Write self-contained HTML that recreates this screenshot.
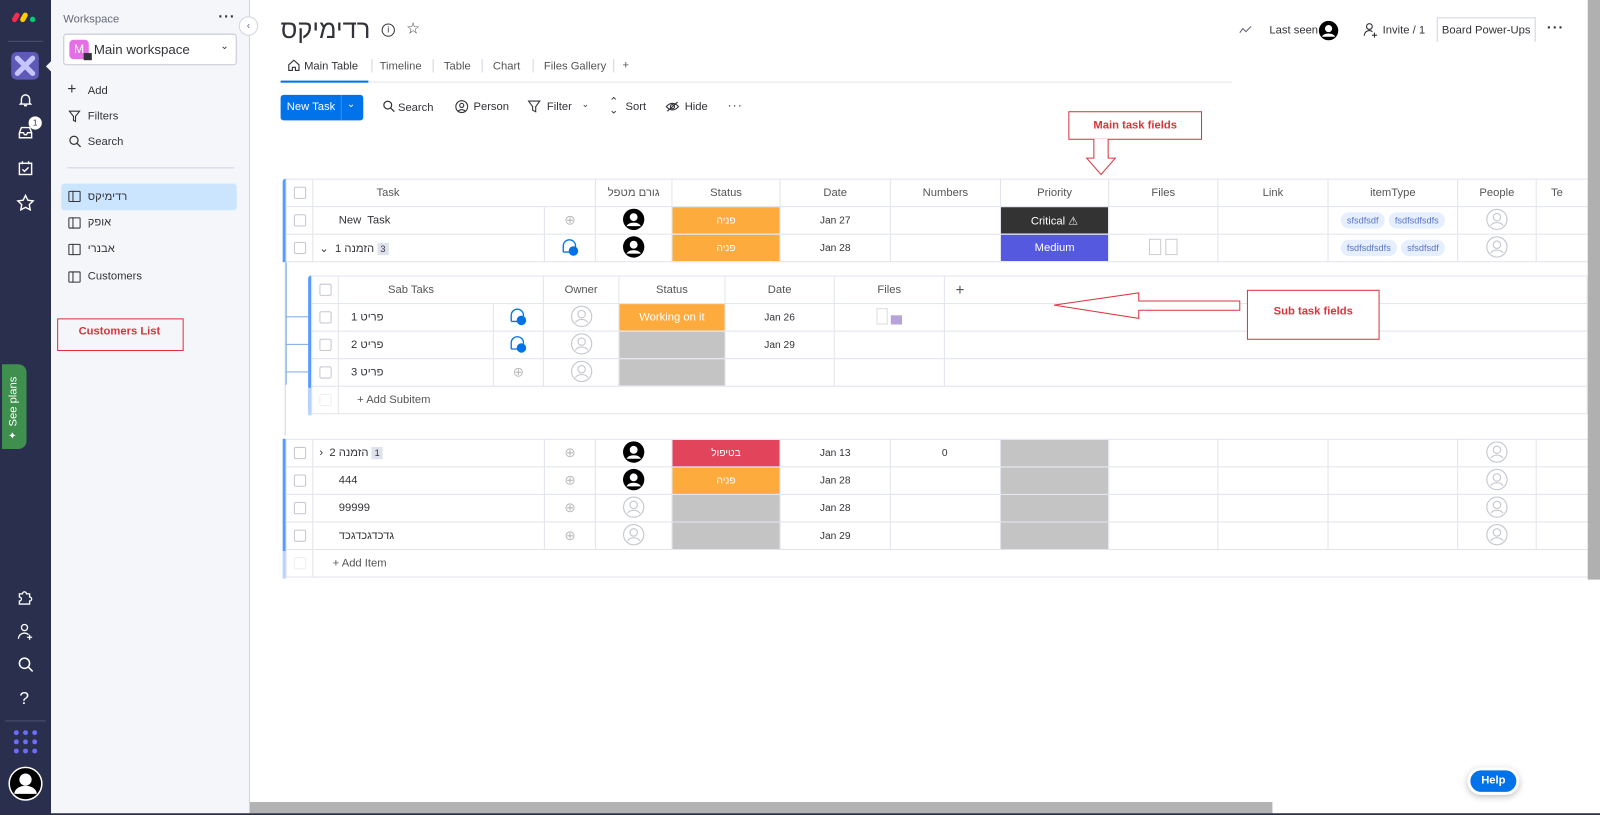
<!DOCTYPE html>
<html><head><meta charset="utf-8">
<style>
*{box-sizing:border-box;margin:0;padding:0}
html,body{width:1600px;height:815px;overflow:hidden;background:#fff;font-family:"Liberation Sans",sans-serif;color:#323338}
#w{position:absolute;left:0;top:0;width:1568px;height:799px;transform:scale(1.0204);transform-origin:0 0}
.a{position:absolute}
.nav{left:0;top:0;width:50px;height:799px;background:#292f4c}
.ws{left:50px;top:0;width:195px;height:799px;background:#f5f6fa;border-right:1px solid #d0d4e4}
.t11{font-size:11px}
table{border-collapse:collapse;table-layout:fixed;position:absolute;font-size:11px}
td{border:1px solid #e1e4ec;height:27px;text-align:center;vertical-align:middle;overflow:hidden;white-space:nowrap;color:#323338}
.hd td{color:#555;font-size:11px}
.cb{display:inline-block;width:12px;height:12px;border:1px solid #c5c7d0;border-radius:2px;vertical-align:middle}
.or{background:#fdab3d;color:#fff;font-size:10px}
.gr{background:#c4c4c4}
.rd{background:#e2445c;color:#fff;font-size:10px}
.tag{display:inline-block;background:#e6efff;color:#5a73c8;border-radius:9px;padding:3px 6px;font-size:9px;margin:0 2px}
.lt{text-align:left;padding-left:20px}
.redbox{border:1px solid #d9343c;color:#d9343c;font-weight:bold;font-size:11px;text-align:center}
.bd{background:#dfe2ec;font-size:9px;padding:1px 3px}
</style></head><body><div id="w">

<div class="a nav"></div>
<svg class="a" style="left:11px;top:9px" width="28" height="14" viewBox="0 0 28 14"><rect x="2" y="3" width="5" height="10" rx="2.5" transform="rotate(30 4.5 8)" fill="#f62b54"/><rect x="10" y="3" width="5" height="10" rx="2.5" transform="rotate(30 12.5 8)" fill="#ffcc00"/><circle cx="21" cy="10" r="2.7" fill="#00ca72"/></svg>
<div class="a" style="left:8px;top:40px;width:34px;height:1px;background:#4b5173"></div>
<div class="a" style="left:11px;top:51px;width:27px;height:27px;background:#5e5ab8;border-radius:5px"></div>
<svg class="a" style="left:14px;top:54px" width="21" height="21" viewBox="0 0 21 21"><path d="M3 3L18 18M18 3L3 18" stroke="#c7c5ff" stroke-width="5" stroke-linecap="round"/></svg>
<div class="a" style="left:45px;top:59px;width:0;height:0;border-top:6px solid transparent;border-bottom:6px solid transparent;border-right:6px solid #f5f6fa"></div>
<svg class="a" style="left:17px;top:90px" width="16" height="16" viewBox="0 0 16 16" fill="none" stroke="#fff" stroke-width="1.4"><path d="M4 11V7a4 4 0 018 0v4l1 1H3z M6.5 13.5h3"/></svg>
<svg class="a" style="left:17px;top:123px" width="16" height="14" viewBox="0 0 16 14" fill="none" stroke="#fff" stroke-width="1.4"><path d="M2 7l2-5h8l2 5v5H2z M2 7h4l1 2h2l1-2h4"/></svg>
<div class="a" style="left:28px;top:114px;width:13px;height:13px;border-radius:50%;background:#fff;color:#292f4c;font-size:8px;text-align:center;line-height:13px">1</div>
<svg class="a" style="left:17px;top:157px" width="16" height="16" viewBox="0 0 16 16" fill="none" stroke="#fff" stroke-width="1.4"><rect x="2" y="3" width="12" height="11"/><path d="M5 1v3M11 1v3M5 9l2 2 4-4"/></svg>
<svg class="a" style="left:16px;top:190px" width="18" height="17" viewBox="0 0 18 17" fill="none" stroke="#fff" stroke-width="1.4"><path d="M9 1.5l2.3 4.7 5.2.7-3.8 3.6.9 5.1L9 13.2 4.4 15.6l.9-5.1L1.5 6.9l5.2-.7z"/></svg>
<div class="a" style="left:2px;top:357px;width:24px;height:83px;background:#3f8f4e;border-radius:0 8px 8px 0"></div>
<div class="a" style="color:#fff;font-size:11px;transform:rotate(-90deg);transform-origin:left top;top:418px;left:7px;white-space:nowrap">See plans</div>
<div class="a" style="left:8px;top:422px;color:#fff;font-size:10px">✦</div>
<svg class="a" style="left:16px;top:576px" width="18" height="18" viewBox="0 0 18 18" fill="none" stroke="#fff" stroke-width="1.3"><path d="M3 6h3a2 2 0 114 0h3v3a2 2 0 110 4v3H3v-3a2 2 0 100-4z"/></svg>
<svg class="a" style="left:16px;top:610px" width="18" height="18" viewBox="0 0 18 18" fill="none" stroke="#fff" stroke-width="1.3"><circle cx="8" cy="5" r="3"/><path d="M2 16a6 6 0 0110-4M13 12v5M10.5 14.5h5"/></svg>
<svg class="a" style="left:17px;top:643px" width="17" height="17" viewBox="0 0 17 17" fill="none" stroke="#fff" stroke-width="1.5"><circle cx="7" cy="7" r="5"/><path d="M11 11l4 4"/></svg>
<div class="a" style="left:19px;top:675px;color:#fff;font-size:17px">?</div>
<div class="a" style="left:5px;top:706px;width:40px;height:1px;background:#4b5173"></div>
<svg class="a" style="left:13px;top:715px" width="24" height="24" viewBox="0 0 24 24" fill="#6c6cff"><circle cx="3" cy="3" r="2.4"/><circle cx="12" cy="3" r="2.4"/><circle cx="21" cy="3" r="2.4"/><circle cx="3" cy="12" r="2.4"/><circle cx="12" cy="12" r="2.4"/><circle cx="21" cy="12" r="2.4"/><circle cx="3" cy="21" r="2.4"/><circle cx="12" cy="21" r="2.4"/><circle cx="21" cy="21" r="2.4"/></svg>
<svg class="a" style="left:8px;top:751px" width="34" height="34" viewBox="0 0 34 34"><circle cx="17" cy="17" r="16" fill="#000" stroke="#fff" stroke-width="1.5"/><circle cx="17" cy="13" r="6" fill="#fff"/><path d="M6 27a11 8 0 0122 0z" fill="#fff"/></svg>

<div class="a ws"></div>
<div class="a t11" style="left:62px;top:13px;color:#676879">Workspace</div>
<div class="a" style="left:214px;top:8px;font-size:14px;letter-spacing:1px;color:#323338;font-weight:bold">···</div>
<div class="a" style="left:234px;top:16px;width:19px;height:19px;border-radius:50%;background:#fff;border:1px solid #d0d4e4;font-size:10px;text-align:center;line-height:17px;color:#676879">‹</div>
<div class="a" style="left:62px;top:33px;width:170px;height:31px;background:#fff;border:1px solid #c3c6d4;border-radius:3px"></div>
<div class="a" style="left:68px;top:39px;width:19px;height:19px;border-radius:4px;background:#e570e5;color:#fff;font-size:12px;text-align:center;line-height:19px">M</div>
<div class="a" style="left:82px;top:52px;width:8px;height:7px;background:#323338"></div>
<div class="a" style="left:92px;top:41px;font-size:13px;color:#323338">Main workspace</div>
<div class="a" style="left:216px;top:40px;font-size:10px;color:#323338">⌄</div>
<div class="a" style="left:66px;top:81px;font-size:15px;line-height:14px">+</div>
<div class="a t11" style="left:86px;top:83px">Add</div>
<svg class="a" style="left:67px;top:108px" width="12" height="12" viewBox="0 0 12 12" fill="none" stroke="#323338" stroke-width="1.1"><path d="M1 1h10L7 6v5L5 10V6z"/></svg>
<div class="a t11" style="left:86px;top:108px">Filters</div>
<svg class="a" style="left:67px;top:132px" width="13" height="13" viewBox="0 0 13 13" fill="none" stroke="#323338" stroke-width="1.2"><circle cx="5.5" cy="5.5" r="4"/><path d="M8.5 8.5l3.5 3.5"/></svg>
<div class="a t11" style="left:86px;top:133px">Search</div>
<div class="a" style="left:66px;top:164px;width:164px;height:1px;background:#d0d4e4"></div>
<div class="a" style="left:60px;top:180px;width:172px;height:26px;background:#cce5ff;border-radius:3px"></div>
<div class="a" style="left:67px;top:187px;width:12px;height:11px;border:1px solid #323338;border-radius:1px"></div><div class="a" style="left:71px;top:187px;width:1px;height:11px;background:#323338"></div>
<div class="a t11" style="left:86px;top:187px">רדימיקס</div>
<div class="a" style="left:67px;top:213px;width:12px;height:11px;border:1px solid #323338;border-radius:1px"></div><div class="a" style="left:71px;top:213px;width:1px;height:11px;background:#323338"></div>
<div class="a t11" style="left:86px;top:212px">אופק</div>
<div class="a" style="left:67px;top:239px;width:12px;height:11px;border:1px solid #323338;border-radius:1px"></div><div class="a" style="left:71px;top:239px;width:1px;height:11px;background:#323338"></div>
<div class="a t11" style="left:86px;top:238px">אבנרי</div>
<div class="a" style="left:67px;top:266px;width:12px;height:11px;border:1px solid #323338;border-radius:1px"></div><div class="a" style="left:71px;top:266px;width:1px;height:11px;background:#323338"></div>
<div class="a t11" style="left:86px;top:265px">Customers</div>
<div class="a redbox" style="left:56px;top:312px;width:124px;height:32px;padding-top:6px;text-align:left;padding-left:20px">Customers List</div>

<div class="a" style="left:275px;top:15px;font-size:25px;color:#323338">רדימיקס</div>
<div class="a" style="left:374px;top:23px;width:13px;height:13px;border:1.3px solid #323338;border-radius:50%;font-size:9px;text-align:center;line-height:11px">i</div>
<div class="a" style="left:398px;top:19px;font-size:15px;color:#323338">☆</div>
<svg class="a" style="left:1214px;top:25px" width="13" height="8" viewBox="0 0 13 8" fill="none" stroke="#676879" stroke-width="1.1"><path d="M1 7l3-4 3 3 5-5"/></svg>
<div class="a t11" style="left:1244px;top:24px">Last seen</div>
<svg class="a" style="left:1292px;top:20px" width="20" height="20" viewBox="0 0 20 20"><circle cx="10" cy="10" r="9.5" fill="#000"/><circle cx="10" cy="8" r="3.5" fill="#fff"/><path d="M3.5 16a7 5 0 0113 0z" fill="#fff"/></svg>
<svg class="a" style="left:1336px;top:22px" width="15" height="15" viewBox="0 0 15 15" fill="none" stroke="#323338" stroke-width="1.1"><circle cx="6" cy="4" r="2.8"/><path d="M1 13a5 5 0 018-4M11 10v5M8.5 12.5h5"/></svg>
<div class="a t11" style="left:1355px;top:24px">Invite / 1</div>
<div class="a t11" style="left:1408px;top:17px;width:97px;height:24px;border:1px solid #d0d4e4;border-bottom:none;text-align:center;line-height:24px">Board Power-Ups</div>
<div class="a" style="left:1516px;top:19px;font-size:14px;font-weight:bold;letter-spacing:1px">···</div>

<div class="a" style="left:275px;top:80px;width:932px;height:1px;background:#e1e4ec"></div>
<div class="a" style="left:275px;top:79px;width:86px;height:2px;background:#0073ea"></div>
<svg class="a" style="left:282px;top:58px" width="12" height="12" viewBox="0 0 12 12" fill="none" stroke="#323338" stroke-width="1.1"><path d="M1 5.5L6 1l5 4.5V11H7.5V8h-3v3H1z"/></svg>
<div class="a t11" style="left:298px;top:59px">Main Table</div>
<div class="a" style="left:364px;top:58px;width:1px;height:13px;background:#d0d4e4"></div>
<div class="a t11" style="left:372px;top:59px;color:#555">Timeline</div>
<div class="a" style="left:424px;top:58px;width:1px;height:13px;background:#d0d4e4"></div>
<div class="a t11" style="left:435px;top:59px;color:#555">Table</div>
<div class="a" style="left:472px;top:58px;width:1px;height:13px;background:#d0d4e4"></div>
<div class="a t11" style="left:483px;top:59px;color:#555">Chart</div>
<div class="a" style="left:522px;top:58px;width:1px;height:13px;background:#d0d4e4"></div>
<div class="a t11" style="left:533px;top:59px;color:#555">Files Gallery</div>
<div class="a" style="left:601px;top:58px;width:1px;height:13px;background:#d0d4e4"></div>
<div class="a t11" style="left:610px;top:58px;color:#555">+</div>

<div class="a" style="left:275px;top:93px;width:81px;height:25px;background:#0073ea;border-radius:3px"></div>
<div class="a" style="left:334px;top:93px;width:1px;height:25px;background:#3a8ff0"></div>
<div class="a" style="left:281px;top:99px;color:#fff;font-size:11px">New Task</div>
<div class="a" style="left:340px;top:97px;color:#fff;font-size:10px">⌄</div>
<svg class="a" style="left:375px;top:98px" width="12" height="12" viewBox="0 0 12 12" fill="none" stroke="#323338" stroke-width="1.2"><circle cx="5" cy="5" r="3.8"/><path d="M8 8l3.5 3.5"/></svg>
<div class="a t11" style="left:390px;top:100px">Search</div>
<svg class="a" style="left:446px;top:98px" width="13" height="13" viewBox="0 0 13 13" fill="none" stroke="#323338" stroke-width="1.1"><circle cx="6.5" cy="6.5" r="5.8"/><circle cx="6.5" cy="5.3" r="2"/><path d="M3 11a4 3 0 017 0"/></svg>
<div class="a t11" style="left:464px;top:99px">Person</div>
<svg class="a" style="left:517px;top:98px" width="13" height="13" viewBox="0 0 13 13" fill="none" stroke="#323338" stroke-width="1.1"><path d="M1 1h11L8 6.5v5L5 10V6.5z"/></svg>
<div class="a t11" style="left:536px;top:99px">Filter</div>
<div class="a" style="left:570px;top:97px;font-size:9px">⌄</div>
<div class="a" style="left:597px;top:96px;font-size:11px;line-height:8px">⌃<br>⌄</div>
<div class="a t11" style="left:613px;top:99px">Sort</div>
<svg class="a" style="left:652px;top:99px" width="14" height="11" viewBox="0 0 14 11" fill="none" stroke="#323338" stroke-width="1.1"><path d="M1 5.5Q7 -1 13 5.5Q7 12 1 5.5z"/><circle cx="7" cy="5.5" r="2"/><path d="M2 10L12 1"/></svg>
<div class="a t11" style="left:671px;top:99px">Hide</div>
<div class="a" style="left:713px;top:96px;font-size:12px;letter-spacing:1px">···</div>

<div class="a redbox" style="left:1047px;top:109px;width:131px;height:28px;line-height:26px;background:#fff">Main task fields</div>
<svg class="a" style="left:1063px;top:136px" width="32" height="36" viewBox="0 0 32 36" fill="#fff" stroke="#d9343c" stroke-width="1"><path d="M9 0v19H2l14 16 14-16h-7V0"/></svg>

<div class="a" style="left:277px;top:175px;width:3px;height:82px;background:#579bfc;border-radius:3px 0 0 0"></div>
<table style="left:280px;top:175px;width:1276px">
<colgroup><col style="width:26px"><col style="width:227px"><col style="width:50px"><col style="width:75px"><col style="width:106px"><col style="width:108px"><col style="width:108px"><col style="width:106px"><col style="width:107px"><col style="width:108px"><col style="width:127px"><col style="width:77px"><col style="width:51px"></colgroup>
<tr class="hd"><td><span class="cb"></span></td><td style="border-right:none;padding-right:80px">Task</td><td style="border-left:none"></td><td>גורם מטפל</td><td>Status</td><td>Date</td><td>Numbers</td><td>Priority</td><td>Files</td><td>Link</td><td>itemType</td><td>People</td><td style="text-align:left;padding-left:14px">Te</td></tr>
<tr><td><span class="cb"></span></td><td class="lt" style="padding-left:25px">New&nbsp; Task</td><td><span style="color:#bbb;font-size:13px">⊕</span></td><td><svg width="22" height="22" viewBox="0 0 20 20"><circle cx="10" cy="10" r="9.5" fill="#000"/><circle cx="10" cy="8" r="3.5" fill="#fff"/><path d="M3.5 16a7 5 0 0113 0z" fill="#fff"/></svg></td><td class="or">פניה</td><td style="font-size:10px">Jan 27</td><td></td><td style="background:#333;color:#fff">Critical ⚠</td><td></td><td></td><td><span class="tag">sfsdfsdf</span><span class="tag">fsdfsdfsdfs</span></td><td><svg width="22" height="22" viewBox="0 0 20 20" fill="none" stroke="#c5c7d0"><circle cx="10" cy="10" r="9"/><circle cx="10" cy="8" r="3.3"/><path d="M4.5 15.5a6 4.5 0 0111 0"/></svg></td><td></td></tr>
<tr><td><span class="cb"></span></td><td class="lt" style="padding-left:6px">⌄ &nbsp;<bdi dir="rtl">הזמנה 1</bdi> <span class="bd">3</span></td><td><svg width="18" height="18" viewBox="0 0 18 18" fill="none" stroke="#0073ea" stroke-width="1.3"><path d="M2 14V8a6 6 0 0112 0v1"/><path d="M2 14h6"/><circle cx="12" cy="13" r="4" fill="#0073ea"/></svg></td><td><svg width="22" height="22" viewBox="0 0 20 20"><circle cx="10" cy="10" r="9.5" fill="#000"/><circle cx="10" cy="8" r="3.5" fill="#fff"/><path d="M3.5 16a7 5 0 0113 0z" fill="#fff"/></svg></td><td class="or">פניה</td><td style="font-size:10px">Jan 28</td><td></td><td style="background:#5559df;color:#fff">Medium</td><td><span style="display:inline-block;width:12px;height:16px;border:1px solid #ccc"></span> <span style="display:inline-block;width:12px;height:16px;border:1px solid #ccc"></span></td><td></td><td><span class="tag">fsdfsdfsdfs</span><span class="tag">sfsdfsdf</span></td><td><svg width="22" height="22" viewBox="0 0 20 20" fill="none" stroke="#c5c7d0"><circle cx="10" cy="10" r="9"/><circle cx="10" cy="8" r="3.3"/><path d="M4.5 15.5a6 4.5 0 0111 0"/></svg></td><td></td></tr>
</table>

<div class="a" style="left:279px;top:257px;width:1px;height:170px;background:#d0d4e4"></div>
<div class="a" style="left:280px;top:257px;width:1px;height:120px;background:#7fa9e8"></div>
<div class="a" style="left:280px;top:310px;width:22px;height:1px;background:#7fa9e8"></div>
<div class="a" style="left:280px;top:337px;width:22px;height:1px;background:#7fa9e8"></div>
<div class="a" style="left:280px;top:364px;width:22px;height:1px;background:#7fa9e8"></div>
<div class="a" style="left:302px;top:270px;width:3px;height:137px;background:#579bfc;border-radius:3px 0 0 3px"></div>
<div class="a" style="left:302px;top:380px;width:3px;height:27px;background:#b9d3fb"></div>
<table style="left:305px;top:270px;width:1250px">
<colgroup><col style="width:26px"><col style="width:152px"><col style="width:49px"><col style="width:74px"><col style="width:104px"><col style="width:107px"><col style="width:108px"><col style="width:30px"><col style="width:600px"></colgroup>
<tr class="hd"><td><span class="cb"></span></td><td style="border-right:none;padding-right:10px">Sab Taks</td><td style="border-left:none"></td><td>Owner</td><td>Status</td><td>Date</td><td>Files</td><td style="font-size:15px;border-right:none">+</td><td style="border-left:none"></td></tr>
<tr><td><span class="cb"></span></td><td class="lt" style="padding-left:12px"><bdi dir="rtl">פריט 1</bdi></td><td><svg width="18" height="18" viewBox="0 0 18 18" fill="none" stroke="#0073ea" stroke-width="1.3"><path d="M2 14V8a6 6 0 0112 0v1"/><path d="M2 14h6"/><circle cx="12" cy="13" r="4" fill="#0073ea"/></svg></td><td><svg width="22" height="22" viewBox="0 0 20 20" fill="none" stroke="#c5c7d0"><circle cx="10" cy="10" r="9"/><circle cx="10" cy="8" r="3.3"/><path d="M4.5 15.5a6 4.5 0 0111 0"/></svg></td><td class="or" style="font-size:11px">Working on it</td><td style="font-size:10px">Jan 26</td><td><span style="display:inline-block;width:11px;height:16px;border:1px solid #ddd"></span> <span style="display:inline-block;width:11px;height:9px;background:#b7a3d9"></span></td><td style="border-right:none"></td><td style="border-left:none"></td></tr>
<tr><td><span class="cb"></span></td><td class="lt" style="padding-left:12px"><bdi dir="rtl">פריט 2</bdi></td><td><svg width="18" height="18" viewBox="0 0 18 18" fill="none" stroke="#0073ea" stroke-width="1.3"><path d="M2 14V8a6 6 0 0112 0v1"/><path d="M2 14h6"/><circle cx="12" cy="13" r="4" fill="#0073ea"/></svg></td><td><svg width="22" height="22" viewBox="0 0 20 20" fill="none" stroke="#c5c7d0"><circle cx="10" cy="10" r="9"/><circle cx="10" cy="8" r="3.3"/><path d="M4.5 15.5a6 4.5 0 0111 0"/></svg></td><td class="gr"></td><td style="font-size:10px">Jan 29</td><td></td><td style="border-right:none"></td><td style="border-left:none"></td></tr>
<tr><td><span class="cb"></span></td><td class="lt" style="padding-left:12px"><bdi dir="rtl">פריט 3</bdi></td><td><span style="color:#bbb;font-size:13px">⊕</span></td><td><svg width="22" height="22" viewBox="0 0 20 20" fill="none" stroke="#c5c7d0"><circle cx="10" cy="10" r="9"/><circle cx="10" cy="8" r="3.3"/><path d="M4.5 15.5a6 4.5 0 0111 0"/></svg></td><td class="gr"></td><td></td><td></td><td style="border-right:none"></td><td style="border-left:none"></td></tr>
<tr><td><span class="cb" style="border-color:#eee"></span></td><td colspan="8" style="text-align:left;padding-left:18px;color:#555">+ Add Subitem</td></tr>
</table>
<svg class="a" style="left:1030px;top:286px" width="190" height="28" viewBox="0 0 190 28" fill="#fff" stroke="#d9343c" stroke-width="1"><path d="M3 13L86 1v8h99v9H86v8z"/></svg>
<div class="a redbox" style="left:1222px;top:284px;width:130px;height:49px;padding-top:14px;background:#fff">Sub task fields</div>

<div class="a" style="left:277px;top:430px;width:3px;height:110px;background:#579bfc"></div>
<div class="a" style="left:277px;top:540px;width:3px;height:27px;background:#b9d3fb"></div>
<table style="left:280px;top:430px;width:1276px">
<colgroup><col style="width:26px"><col style="width:227px"><col style="width:50px"><col style="width:75px"><col style="width:106px"><col style="width:108px"><col style="width:108px"><col style="width:106px"><col style="width:107px"><col style="width:108px"><col style="width:127px"><col style="width:77px"><col style="width:51px"></colgroup>
<tr><td><span class="cb"></span></td><td class="lt" style="padding-left:6px">› &nbsp;<bdi dir="rtl">הזמנה 2</bdi> <span class="bd">1</span></td><td><span style="color:#bbb;font-size:13px">⊕</span></td><td><svg width="22" height="22" viewBox="0 0 20 20"><circle cx="10" cy="10" r="9.5" fill="#000"/><circle cx="10" cy="8" r="3.5" fill="#fff"/><path d="M3.5 16a7 5 0 0113 0z" fill="#fff"/></svg></td><td class="rd">בטיפול</td><td style="font-size:10px">Jan 13</td><td style="text-align:left;padding-left:50px;font-size:10px">0</td><td class="gr"></td><td></td><td></td><td></td><td><svg width="22" height="22" viewBox="0 0 20 20" fill="none" stroke="#c5c7d0"><circle cx="10" cy="10" r="9"/><circle cx="10" cy="8" r="3.3"/><path d="M4.5 15.5a6 4.5 0 0111 0"/></svg></td><td></td></tr>
<tr><td><span class="cb"></span></td><td class="lt" style="padding-left:25px">444</td><td><span style="color:#bbb;font-size:13px">⊕</span></td><td><svg width="22" height="22" viewBox="0 0 20 20"><circle cx="10" cy="10" r="9.5" fill="#000"/><circle cx="10" cy="8" r="3.5" fill="#fff"/><path d="M3.5 16a7 5 0 0113 0z" fill="#fff"/></svg></td><td class="or">פניה</td><td style="font-size:10px">Jan 28</td><td></td><td class="gr"></td><td></td><td></td><td></td><td><svg width="22" height="22" viewBox="0 0 20 20" fill="none" stroke="#c5c7d0"><circle cx="10" cy="10" r="9"/><circle cx="10" cy="8" r="3.3"/><path d="M4.5 15.5a6 4.5 0 0111 0"/></svg></td><td></td></tr>
<tr><td><span class="cb"></span></td><td class="lt" style="padding-left:25px">99999</td><td><span style="color:#bbb;font-size:13px">⊕</span></td><td><svg width="22" height="22" viewBox="0 0 20 20" fill="none" stroke="#c5c7d0"><circle cx="10" cy="10" r="9"/><circle cx="10" cy="8" r="3.3"/><path d="M4.5 15.5a6 4.5 0 0111 0"/></svg></td><td class="gr"></td><td style="font-size:10px">Jan 28</td><td></td><td class="gr"></td><td></td><td></td><td></td><td><svg width="22" height="22" viewBox="0 0 20 20" fill="none" stroke="#c5c7d0"><circle cx="10" cy="10" r="9"/><circle cx="10" cy="8" r="3.3"/><path d="M4.5 15.5a6 4.5 0 0111 0"/></svg></td><td></td></tr>
<tr><td><span class="cb"></span></td><td class="lt" style="padding-left:25px">גדכדגכדגכד</td><td><span style="color:#bbb;font-size:13px">⊕</span></td><td><svg width="22" height="22" viewBox="0 0 20 20" fill="none" stroke="#c5c7d0"><circle cx="10" cy="10" r="9"/><circle cx="10" cy="8" r="3.3"/><path d="M4.5 15.5a6 4.5 0 0111 0"/></svg></td><td class="gr"></td><td style="font-size:10px">Jan 29</td><td></td><td class="gr"></td><td></td><td></td><td></td><td><svg width="22" height="22" viewBox="0 0 20 20" fill="none" stroke="#c5c7d0"><circle cx="10" cy="10" r="9"/><circle cx="10" cy="8" r="3.3"/><path d="M4.5 15.5a6 4.5 0 0111 0"/></svg></td><td></td></tr>
<tr><td><span class="cb" style="border-color:#eee"></span></td><td colspan="12" style="text-align:left;padding-left:19px;color:#555">+ Add Item</td></tr>
</table>

<div class="a" style="left:1556px;top:0;width:12px;height:568px;background:#b0b0b0"></div>
<div class="a" style="left:245px;top:786px;width:1002px;height:11px;background:#b3b3b3"></div>
<div class="a" style="left:0;top:797px;width:1568px;height:2px;background:#2b2f45"></div>
<div class="a" style="left:1438px;top:752px;width:51px;height:27px;background:#0073ea;border:3px solid #fff;border-radius:14px;box-shadow:0 2px 6px rgba(0,0,0,.25);color:#fff;font-size:11px;font-weight:bold;text-align:center;line-height:21px">Help</div>

</div></body></html>
